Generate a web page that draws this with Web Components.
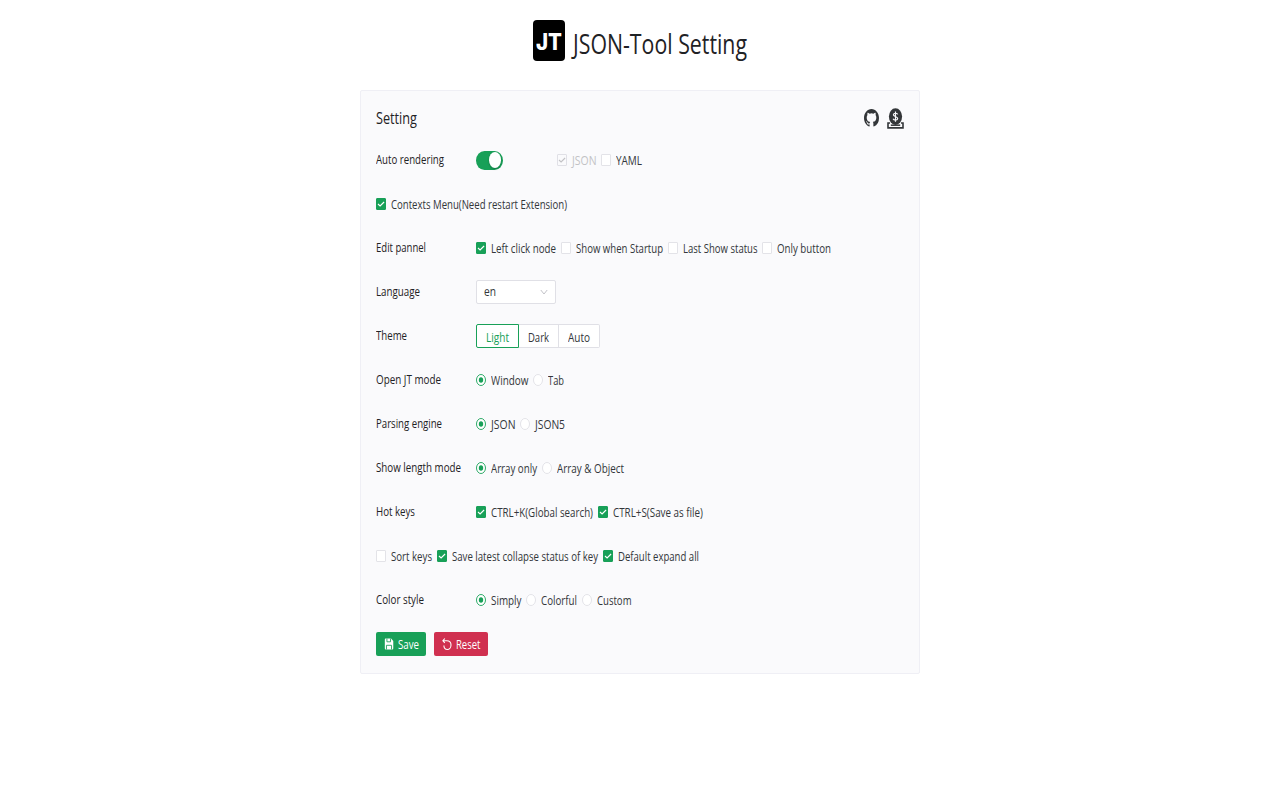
<!DOCTYPE html>
<html lang="en">
<head>
<meta charset="utf-8">
<title>JSON-Tool Setting</title>
<style>
body{margin:0;background:#fff;font-family:"Open Sans","Noto Sans",sans-serif;font-size:13.5px;color:#33363a}
</style>
</head>
<body>
<settings-page></settings-page>
<script>
const define = (name, html, init) => {
  const t = document.createElement('template');
  t.innerHTML = html;
  customElements.define(name, class extends HTMLElement {
    connectedCallback() {
      if (this.shadowRoot) return;
      this.attachShadow({mode: 'open'}).append(t.content.cloneNode(true));
      if (init) init.call(this, this.shadowRoot);
    }
  });
};

/* Single line of text condensed to the width given in "w". */
define('fit-text', `<style>
:host{display:block;flex:none;white-space:nowrap;line-height:20px}
span{display:block;width:max-content;transform-origin:0 50%}
</style><span><slot></slot></span>`, function (r) {
  const w = +this.getAttribute('w'), s = r.querySelector('span');
  this.style.width = w + 'px';
  s.style.transform = 'scaleX(' + w / s.getBoundingClientRect().width + ')';
});

define('check-item', `<style>
:host{display:flex;align-items:center;gap:5px;margin-right:5px}
.box{box-sizing:border-box;width:10px;height:12px;border:1px solid #e3e3e8;border-radius:1px;background:#fff;display:flex}
svg{display:none;width:8px;height:10px;fill:none;stroke:#fff;stroke-width:1.1}
:host([checked]) .box{background:#18a058;border-color:#18a058}
:host([checked]) svg{display:block}
:host([disabled]){color:#c2c2c5}
:host([disabled]) .box{background:#fafafc;border-color:#e0e0e6}
:host([disabled]) svg{stroke:#c2c2c5}
</style><div class="box"><svg viewBox="0 0 8 10"><path d="M1 5 3.1 7 7.1 3"/></svg></div><slot></slot>`);

define('radio-item', `<style>
:host{display:flex;align-items:center;gap:5px;margin-right:5px}
svg{display:block;width:10px;height:12px;fill:#fff;stroke:#e3e3e8}
.mark{display:none;fill:#18a058;stroke:none}
:host([checked]) svg{stroke:#18a058;stroke-width:.9}
:host([checked]) .mark{display:block}
</style><svg viewBox="0 0 10 12"><ellipse cx="5" cy="6" rx="4.5" ry="5.5"/><ellipse class="mark" cx="5" cy="6" rx="2.2" ry="2.7"/></svg><slot></slot>`);

define('toggle-switch', `<style>
:host{display:flex;box-sizing:border-box;width:27px;height:19px;border-radius:8.5px/9.5px;background:#18a058;padding:1.5px;justify-content:flex-end;margin-right:54px}
i{width:12.5px;height:16px;border-radius:50%;background:#fff;box-shadow:0 1px 2px #0004}
</style><i></i>`);

define('select-box', `<style>
:host{display:flex;box-sizing:border-box;width:80px;height:24px;border:1px solid #e0e0e6;border-radius:2px;background:#fff;align-items:center;justify-content:space-between;padding:0 7px 2px}
svg{width:8px;height:8px;fill:none;stroke:#c2c2c8;position:relative;top:1px}
</style><slot></slot><svg viewBox="0 0 8 8"><path d="M.8 2 4 6 7.2 2"/></svg>`);

define('segment-group', `<style>
:host{display:flex;box-sizing:border-box;height:24px}
</style><slot></slot>`);
define('segment-button', `<style>
:host{display:flex;box-sizing:border-box;height:24px;padding:1px 9px 0;border:1px solid #e0e0e6;border-left:0;background:#fff;align-items:center}
:host(:last-child){border-radius:0 2px 2px 0}
:host([active]){border:1px solid #18a058;border-radius:2px 0 0 2px;color:#18a058}
</style><slot></slot>`);

define('setting-row', `<style>
:host{display:flex;height:44px;align-items:center}
.label{width:99.5px;flex:none;padding-bottom:2px;color:#1f2225}
:host([wide]) .label{display:none}
</style><div class="label"><slot name="label"></slot></div><slot></slot>`);

define('action-button', `<style>
:host{display:flex;box-sizing:border-box;height:24px;border-radius:2px;background:#18a058;color:#fff;align-items:center;padding:0 7.5px;gap:4px;margin-right:8px}
:host([danger]){background:#d03050}
</style><slot name="icon"></slot><slot></slot>`);

define('settings-page', `<style>
:host{display:flex;flex-direction:column;align-items:center;height:800px;overflow:hidden}
header{display:flex;height:90px;box-sizing:border-box;padding-top:20px;gap:8px;align-items:flex-start;color:#1f2225}
.logo{width:32px;height:41px;border-radius:4px;background:#000;color:#fff;display:flex;align-items:center;justify-content:center;font:800 22.5px Inter,"Liberation Sans",sans-serif}
.logo fit-text{padding-top:3px}
header>fit-text{font-size:26.5px;line-height:40px;padding-top:4px}
main{box-sizing:border-box;width:560px;height:584px;border:1px solid #efeff5;border-radius:2px;background:#fafafc;padding:0 15.4px}
.head{display:flex;height:47px;align-items:center;padding-top:7px;box-sizing:border-box;justify-content:space-between;color:#1f2225}
.head fit-text{font-size:16.5px}
.icons{display:flex;gap:8px;align-items:center}
svg{display:block}
</style>
<header><div class="logo"><fit-text w="26">JT</fit-text></div><fit-text w="174">JSON-Tool Setting</fit-text></header>
<main>
<div class="head"><fit-text w="41">Setting</fit-text>
<div class="icons">
<svg width="15" height="18" viewBox="0 0 16 16" preserveAspectRatio="none" fill="#333639"><path d="M8 0C3.58 0 0 3.58 0 8c0 3.54 2.29 6.53 5.47 7.59.4.07.55-.17.55-.38 0-.19-.01-.82-.01-1.49-2.01.37-2.53-.49-2.69-.94-.09-.23-.48-.94-.82-1.13-.28-.15-.68-.52-.01-.53.63-.01 1.08.58 1.23.82.72 1.21 1.87.87 2.33.66.07-.52.28-.87.51-1.07-1.78-.2-3.64-.89-3.64-3.95 0-.87.31-1.59.82-2.15-.08-.2-.36-1.02.08-2.12 0 0 .67-.21 2.2.82a7.4 7.4 0 0 1 4 0c1.53-1.04 2.2-.82 2.2-.82.44 1.1.16 1.92.08 2.12.51.56.82 1.27.82 2.15 0 3.07-1.87 3.75-3.65 3.95.29.25.54.73.54 1.48 0 1.07-.01 1.93-.01 2.2 0 .21.15.46.55.38A8 8 0 0 0 16 8c0-4.42-3.58-8-8-8z"/></svg>
<svg width="17" height="21" viewBox="0 0 17 21" fill="none" stroke="#333639"><ellipse cx="8.5" cy="8.6" rx="6.6" ry="8.3" fill="#333639" stroke="none"/><path d="M3 15H1v4.900h15V15h-2" stroke-width="1.600"/><path d="M3.800 17.200h9.400" stroke-width="1.500"/><path d="M10.700 6.300C10.400 5 6.600 4.700 6.400 6.700c-.1 2 4.300 1.500 4.300 3.900 0 2.100-4 2-4.600.2M8.500 3.400v10.400" stroke="#fafafc" stroke-width="1.200"/></svg>
</div></div>
<setting-row><fit-text slot="label" w="68">Auto rendering</fit-text><toggle-switch></toggle-switch><check-item checked disabled><fit-text w="24.5">JSON</fit-text></check-item><check-item><fit-text w="26">YAML</fit-text></check-item></setting-row>
<setting-row wide><check-item checked><fit-text w="176">Contexts Menu(Need restart Extension)</fit-text></check-item></setting-row>
<setting-row><fit-text slot="label" w="50">Edit pannel</fit-text><check-item checked><fit-text w="65">Left click node</fit-text></check-item><check-item><fit-text w="87">Show when Startup</fit-text></check-item><check-item><fit-text w="74.5">Last Show status</fit-text></check-item><check-item><fit-text w="54">Only button</fit-text></check-item></setting-row>
<setting-row><fit-text slot="label" w="44">Language</fit-text><select-box><fit-text w="12">en</fit-text></select-box></setting-row>
<setting-row><fit-text slot="label" w="31">Theme</fit-text><segment-group><segment-button active><fit-text w="23">Light</fit-text></segment-button><segment-button><fit-text w="21">Dark</fit-text></segment-button><segment-button><fit-text w="22">Auto</fit-text></segment-button></segment-group></setting-row>
<setting-row><fit-text slot="label" w="65">Open JT mode</fit-text><radio-item checked><fit-text w="37.5">Window</fit-text></radio-item><radio-item><fit-text w="16">Tab</fit-text></radio-item></setting-row>
<setting-row><fit-text slot="label" w="66">Parsing engine</fit-text><radio-item checked><fit-text w="24.5">JSON</fit-text></radio-item><radio-item><fit-text w="30">JSON5</fit-text></radio-item></setting-row>
<setting-row><fit-text slot="label" w="85">Show length mode</fit-text><radio-item checked><fit-text w="46">Array only</fit-text></radio-item><radio-item><fit-text w="67">Array &amp; Object</fit-text></radio-item></setting-row>
<setting-row><fit-text slot="label" w="39">Hot keys</fit-text><check-item checked><fit-text w="102">CTRL+K(Global search)</fit-text></check-item><check-item checked><fit-text w="90">CTRL+S(Save as file)</fit-text></check-item></setting-row>
<setting-row wide><check-item><fit-text w="41">Sort keys</fit-text></check-item><check-item checked><fit-text w="146">Save latest collapse status of key</fit-text></check-item><check-item checked><fit-text w="81">Default expand all</fit-text></check-item></setting-row>
<setting-row><fit-text slot="label" w="48">Color style</fit-text><radio-item checked><fit-text w="30.5">Simply</fit-text></radio-item><radio-item><fit-text w="36">Colorful</fit-text></radio-item><radio-item><fit-text w="34.5">Custom</fit-text></radio-item></setting-row>
<setting-row wide>
<action-button><svg slot="icon" width="10" height="14" viewBox="0 0 11 14" preserveAspectRatio="none"><path d="M1.8 1.500h6l2.400 2.400v7.400q0 1.200-1.100 1.200H1.800Q.9 12.500.9 11.300V2.700q0-1.200.9-1.200z" fill="#fff"/><path d="M3.200 1.500v3.300h4V1.500M2.700 12.500V8.300h5.600v4.200" fill="none" stroke="#18a058" stroke-width=".9"/></svg><fit-text w="21">Save</fit-text></action-button>
<action-button danger><svg slot="icon" width="10" height="14" viewBox="0 0 10 14" fill="none" stroke="#fff" stroke-width="1.100"><path d="M2.800 1.500.9 3.700l1.900 2.200M.9 3.700h3.900c2.900 0 4.200 2 4.200 4.300s-1.500 4.500-3.700 4.500S1.900 10.800 1.900 8.500"/></svg><fit-text w="24.500">Reset</fit-text></action-button>
</setting-row>
</main>`);
</script>
</body>
</html>
